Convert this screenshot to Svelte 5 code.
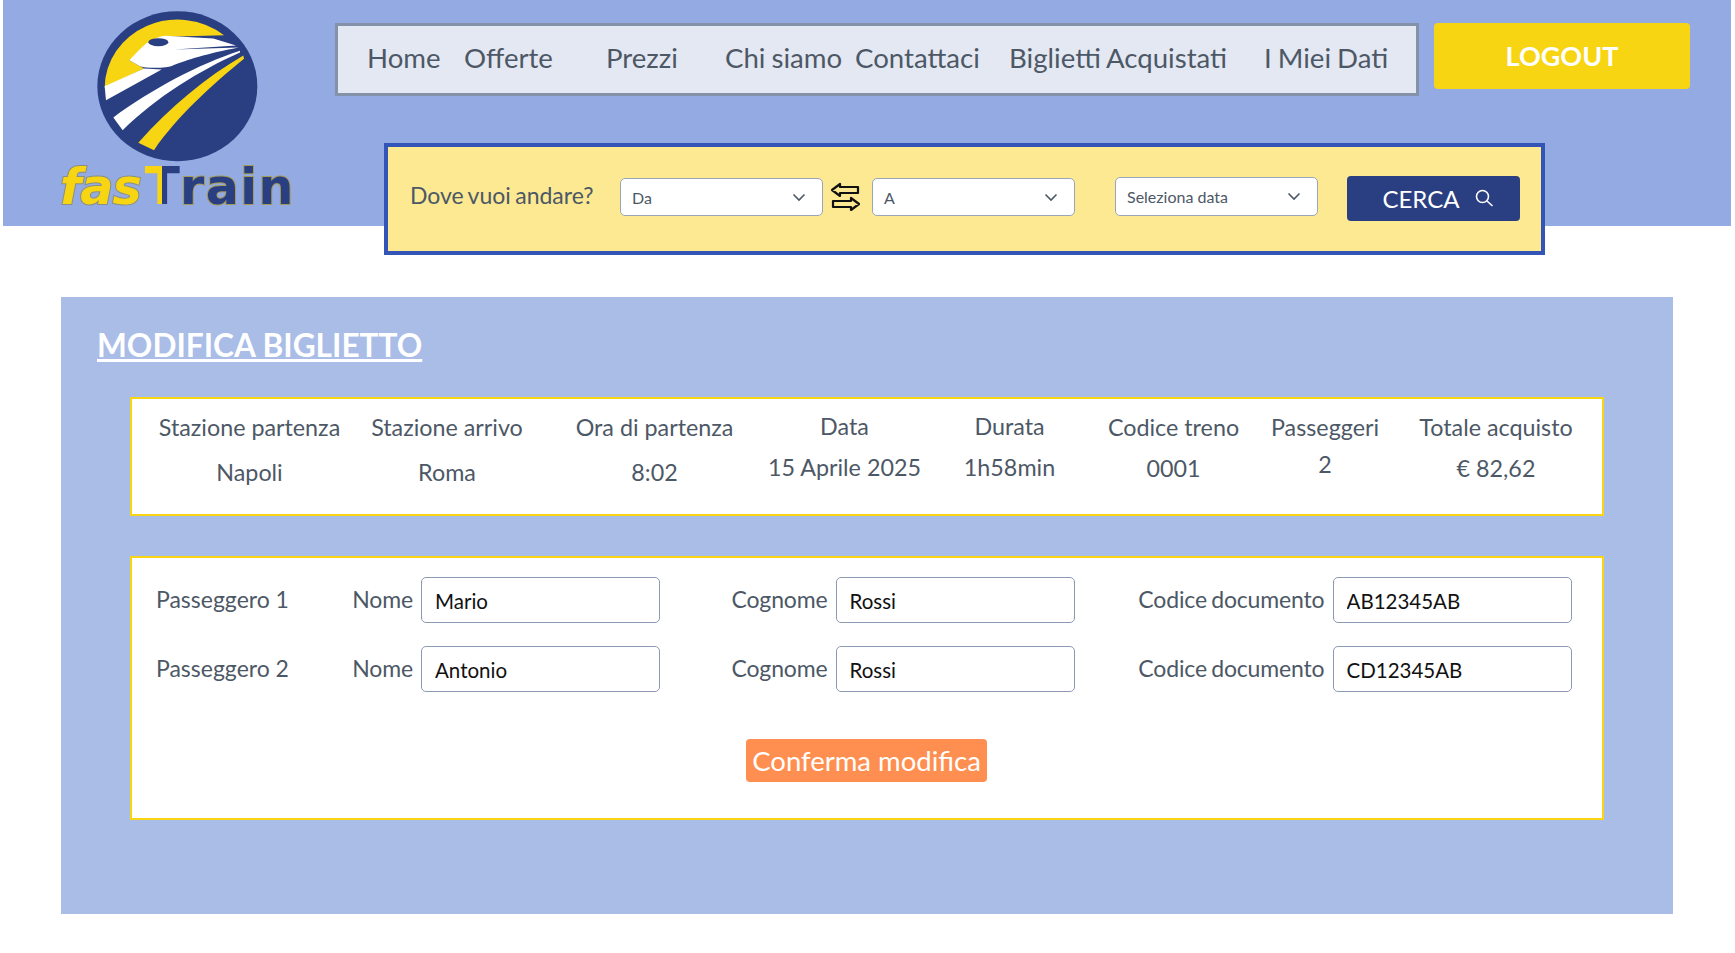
<script>
  const links = ['Home', 'Offerte', 'Prezzi', 'Chi siamo', 'Contattaci', 'Biglietti Acquistati', 'I Miei Dati'];

  const info = [
    { label: 'Stazione partenza', value: 'Napoli', gap: 'wide' },
    { label: 'Stazione arrivo', value: 'Roma', gap: 'wide' },
    { label: 'Ora di partenza', value: '8:02', gap: 'wide' },
    { label: 'Data', value: '15 Aprile 2025', gap: 'mid', up: true },
    { label: 'Durata', value: '1h58min', gap: 'mid', up: true },
    { label: 'Codice treno', value: '0001', gap: 'mid' },
    { label: 'Passeggeri', value: '2', gap: 'tight' },
    { label: 'Totale acquisto', value: '€ 82,62', gap: 'mid' }
  ];

  const passengers = [
    { name: 'Mario', surname: 'Rossi', doc: 'AB12345AB' },
    { name: 'Antonio', surname: 'Rossi', doc: 'CD12345AB' }
  ];
</script>

<style>
  :global(body) {
    margin: 0;
    background: #fff;
    font-family: Lato, "Liberation Sans", sans-serif;
    color: #4d5866;
  }

  .page {
    padding: 0 4px 0 3px;
  }

  header {
    height: 226px;
    background: #94aae2;
    display: flex;
  }

  .logo {
    width: 332px;
    flex: none;
    padding-top: 8px;
    box-sizing: border-box;
  }

  .logo svg {
    display: block;
    margin-left: 57px;
  }

  .brand {
    display: flex;
    align-items: baseline;
    margin: -14px 0 0 57px;
    font-family: "DejaVu Sans", sans-serif;
    font-weight: 700;
    font-size: 49px;
    line-height: 50px;
    -webkit-text-stroke: 2px #8a8f80;
    paint-order: stroke fill;
  }

  .fas {
    color: #f8d512;
    font-style: italic;
    letter-spacing: -1px;
  }

  .t {
    font-size: 52px;
    margin-left: 4px;
    background: linear-gradient(90deg, #f8d512 50%, #2a3f82 50%);
    -webkit-background-clip: text;
    background-clip: text;
    color: transparent;
    -webkit-text-stroke: 0;
  }

  .rain {
    color: #2a3f82;
    letter-spacing: 1.5px;
    -webkit-text-stroke: 2px #a39a55;
  }

  .head-right {
    flex: 1;
    padding-top: 23px;
  }

  .top {
    display: flex;
    align-items: flex-start;
    gap: 15px;
  }

  nav {
    width: 1084px;
    height: 73px;
    box-sizing: border-box;
    border: 3px solid #8391a9;
    background: #e4e8f2;
    padding: 0 0 4px 29px;
    display: grid;
    grid-template-columns: 97px 142px 119px 130px 154px 255px auto;
    align-items: center;
    font-size: 27.6px;
    word-spacing: -1px;
  }

  .logout {
    width: 256px;
    height: 66px;
    border: 0;
    border-radius: 4px;
    background: #f8d512;
    color: #fff;
    font: 700 27px Lato, sans-serif;
    padding: 0 0 2px;
  }

  .search {
    margin: 47px 0 0 49px;
    width: 1161px;
    height: 112px;
    box-sizing: border-box;
    border: 4px solid #3355b8;
    background: #fce992;
    display: flex;
    align-items: center;
    position: relative;
    padding-left: 22px;
  }

  .search .q {
    width: 210px;
    font-size: 23px;
    word-spacing: -1.5px;
    margin-bottom: 8px;
  }

  .select {
    width: 203px;
    height: 38px;
    box-sizing: border-box;
    background: #fff;
    border: 1px solid #9aa6b8;
    border-radius: 5px;
    padding: 0 16px 0 11px;
    display: flex;
    align-items: center;
    justify-content: space-between;
    font-size: 16px;
    margin-bottom: 4px;
  }

  .swap {
    margin: 0 11px 5px 7px;
    display: block;
  }

  .date {
    margin-left: 40px;
    margin-bottom: 6px;
    height: 39px;
  }

  .cerca {
    margin: 0 0 2px 29px;
    width: 173px;
    height: 45px;
    border: 0;
    border-radius: 4px;
    background: #2a3f82;
    color: #fff;
    font: 400 24px Lato, sans-serif;
    display: flex;
    align-items: center;
    justify-content: center;
    gap: 14px;
    padding: 0 0 0 9px;
  }

  main {
    margin: 71px 58px 0;
    height: 617px;
    background: #a9bde7;
    padding: 30px 69px 0;
    box-sizing: border-box;
  }

  h1 {
    margin: 0 0 0 -33px;
    font-size: 31.6px;
    line-height: 36px;
    font-weight: 700;
    color: #fff;
    text-decoration: underline;
  }

  .card {
    background: #fff;
    border: 2px solid #f8d512;
    box-sizing: border-box;
  }

  .info {
    margin-top: 34px;
    height: 119px;
    padding: 13px 0 0 19px;
    display: grid;
    grid-template-columns: 197px 198px 217px 163px 167px 161px 142px 200px;
    text-align: center;
    font-size: 23.3px;
    line-height: 30px;
  }

  .info .label.up {
    margin-top: -1px;
  }

  .wide { margin-top: 15px; }
  .mid { margin-top: 11px; }
  .tight { margin-top: 7px; }

  .form {
    margin-top: 40px;
    height: 264px;
    padding: 19px 30px 0 24px;
    font-size: 23px;
  }

  .row {
    display: grid;
    grid-template-columns: 195px 70px 239px 175.5px 239px 258px 239px;
    align-items: center;
    height: 46px;
    margin-bottom: 23px;
  }

  .row span, .row label {
    padding-bottom: 3px;
  }

  .row label {
    text-align: right;
    padding-right: 8px;
    letter-spacing: -0.15px;
    word-spacing: -1.500px;
  }

  .row input {
    width: 239px;
    height: 46px;
    box-sizing: border-box;
    border: 1px solid #8c9ab3;
    border-radius: 5px;
    padding: 2px 13px 0;
    font: 400 20.5px Lato, sans-serif;
    color: #111;
    background: #fff;
  }

  .row-foot {
    display: flex;
    justify-content: center;
    margin-top: 47px;
    padding-left: 5px;
  }

  .confirm {
    width: 241px;
    height: 43px;
    border: 0;
    border-radius: 4px;
    background: #ff8f50;
    color: #fff;
    font: 400 27.500px Lato, sans-serif;
    padding: 0;
  }
</style>

{#snippet chevron()}
  <svg width="14" height="9" viewBox="0 0 14 9" fill="none" stroke="#4d5866" stroke-width="1.6"><path d="M1.5 1.5 7 7l5.500-5.500" /></svg>
{/snippet}

<div class="page">
  <header>
    <div class="logo">
      <svg width="240" height="167" viewBox="180 24 720 500">
        <ellipse cx="532" cy="258" rx="240" ry="225" fill="#2a3f82" />
        <path fill="#f8d512" d="M314 262A219 205 0 0 1 672 105L500 110 388 180 432 205Z" />
        <path fill="#fff" d="M388 180C420 150 440 115 495 107L640 115 708 136 524 148 716 142C620 160 560 180 520 195 500 205 440 205 420 198Z" />
        <ellipse cx="475" cy="126" rx="30" ry="12" fill="#2a3f82" />
        <path fill="#fff" d="M432 205 485 208 318 300 314 258Z" />
        <path fill="#fff" d="M720 152C600 190 450 270 340 352L368 390C470 290 600 210 720 157Z" />
        <path fill="#f8d512" d="M730 166C620 230 510 320 415 428L462 450C530 350 640 250 732 176Z" />
      </svg>
      <div class="brand"><span class="fas">fas</span><span class="t">T</span><span class="rain">rain</span></div>
    </div>
    <div class="head-right">
      <div class="top">
        <nav>
          {#each links as link}
            <span>{link}</span>
          {/each}
        </nav>
        <button class="logout">LOGOUT</button>
      </div>
      <div class="search">
        <span class="q">Dove vuoi andare?</span>
        <div class="select"><span>Da</span>{@render chevron()}</div>
        <svg class="swap" width="31" height="30" viewBox="0 0 31 30" fill="#fce992" stroke="#111" stroke-width="2.200" stroke-linejoin="round">
          <path d="M2 8 10 2v3h18v6H10v3Z" />
          <path d="M29 22l-8-6v3H3v6h18v3Z" />
        </svg>
        <div class="select"><span>A</span>{@render chevron()}</div>
        <div class="select date"><span>Seleziona data</span>{@render chevron()}</div>
        <button class="cerca">CERCA
          <svg width="20" height="20" viewBox="0 0 20 20" fill="none" stroke="#fff" stroke-width="1.600"><circle cx="8.500" cy="8.500" r="6" /><path d="m13 13 5.500 5" /></svg>
        </button>
      </div>
    </div>
  </header>

  <main>
    <h1>MODIFICA BIGLIETTO</h1>
    <section class="card info">
      {#each info as col}
        <div>
          <div class="label" class:up={col.up}>{col.label}</div>
          <div class={col.gap}>{col.value}</div>
        </div>
      {/each}
    </section>
    <section class="card form">
      {#each passengers as p, i}
        <div class="row">
          <span>Passeggero {i + 1}</span>
          <label for="nome{i}">Nome</label>
          <input id="nome{i}" value={p.name} />
          <label for="cognome{i}">Cognome</label>
          <input id="cognome{i}" value={p.surname} />
          <label for="doc{i}">Codice documento</label>
          <input id="doc{i}" value={p.doc} />
        </div>
      {/each}
      <div class="row-foot">
        <button class="confirm">Conferma modifica</button>
      </div>
    </section>
  </main>
</div>
